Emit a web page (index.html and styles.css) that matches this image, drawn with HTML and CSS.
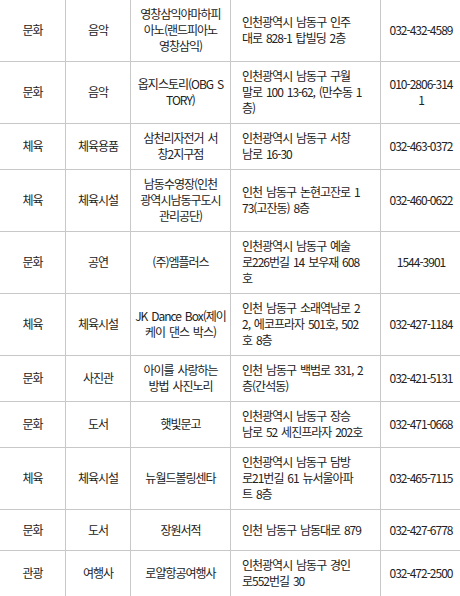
FILE: index.html
```html
<!DOCTYPE html>
<html lang="ko">
<head>
<meta charset="utf-8">
<title>시설 목록</title>
<link rel="stylesheet" href="styles.css">
</head>
<body>
<table class="list">
  <colgroup>
    <col class="c-type">
    <col class="c-cat">
    <col class="c-name">
    <col class="c-addr">
    <col class="c-tel">
  </colgroup>
  <tbody>
    <tr><td>문화</td><td>음악</td><td>영창삼익야마하피<br>아노(랜드피아노<br>영창삼익)</td><td class="addr">인천광역시 남동구 인주<br>대로 828-1 탑빌딩 2층</td><td>032-432-4589</td></tr>
    <tr><td>문화</td><td>음악</td><td>옵지스토리(OBG S<br>TORY)</td><td class="addr">인천광역시 남동구 구월<br>말로 100 13-62, (만수동 1<br>층)</td><td>010-2806-314<br>1</td></tr>
    <tr><td>체육</td><td>체육용품</td><td>삼천리자전거 서<br>창2지구점</td><td class="addr">인천광역시 남동구 서창<br>남로 16-30</td><td>032-463-0372</td></tr>
    <tr><td>체육</td><td>체육시설</td><td>남동수영장(인천<br>광역시남동구도시<br>관리공단)</td><td class="addr">인천 남동구 논현고잔로 1<br>73(고잔동) 8층</td><td>032-460-0622</td></tr>
    <tr><td>문화</td><td>공연</td><td>(주)엠플러스</td><td class="addr">인천광역시 남동구 예술<br>로226번길 14 보우재 608<br>호</td><td>1544-3901</td></tr>
    <tr><td>체육</td><td>체육시설</td><td>JK Dance Box(제이<br>케이 댄스 박스)</td><td class="addr">인천 남동구 소래역남로 2<br>2, 에코프라자 501호, 502<br>호 8층</td><td>032-427-1184</td></tr>
    <tr><td>문화</td><td>사진관</td><td>아이를 사랑하는<br>방법 사진노리</td><td class="addr">인천 남동구 백범로 331, 2<br>층(간석동)</td><td>032-421-5131</td></tr>
    <tr><td>문화</td><td>도서</td><td>햇빛문고</td><td class="addr">인천광역시 남동구 장승<br>남로 52 세진프라자 202호</td><td>032-471-0668</td></tr>
    <tr><td>체육</td><td>체육시설</td><td>뉴월드볼링센타</td><td class="addr">인천광역시 남동구 담방<br>로21번길 61 뉴서울아파<br>트 8층</td><td>032-465-7115</td></tr>
    <tr><td>문화</td><td>도서</td><td>장원서적</td><td class="addr">인천 남동구 남동대로 879</td><td>032-427-6778</td></tr>
    <tr><td>관광</td><td>여행사</td><td>로얄항공여행사</td><td class="addr">인천광역시 남동구 경인<br>로552번길 30</td><td>032-472-2500</td></tr>
  </tbody>
</table>
</body>
</html>
```

FILE: styles.css
```css
html, body {
  margin: 0;
  padding: 0;
  background: #fff;
}
body {
  width: 460px;
  height: 596px;
  overflow: hidden;
  font-family: "Noto Sans CJK KR", "Noto Sans", sans-serif;
  font-size: 12px;
  letter-spacing: -1px;
  word-spacing: 1.5px;
  color: #222;
}
.list {
  border-collapse: collapse;
  table-layout: fixed;
  width: 462px;
  margin: -1px 0 0 -1px;
}
.c-type { width: 66px; }
.c-cat { width: 65px; }
.c-name { width: 100px; }
.c-addr { width: 150px; }
.c-tel { width: 81px; }
.list td {
  border: 1px solid #c8c8c8;
  padding: 6px 2px 7px;
  height: 27px;
  line-height: 16px;
  text-align: center;
  vertical-align: middle;
  white-space: nowrap;
  overflow: hidden;
}
.list td.addr {
  text-align: left;
  padding-left: 11px;
  padding-right: 4px;
}
```
